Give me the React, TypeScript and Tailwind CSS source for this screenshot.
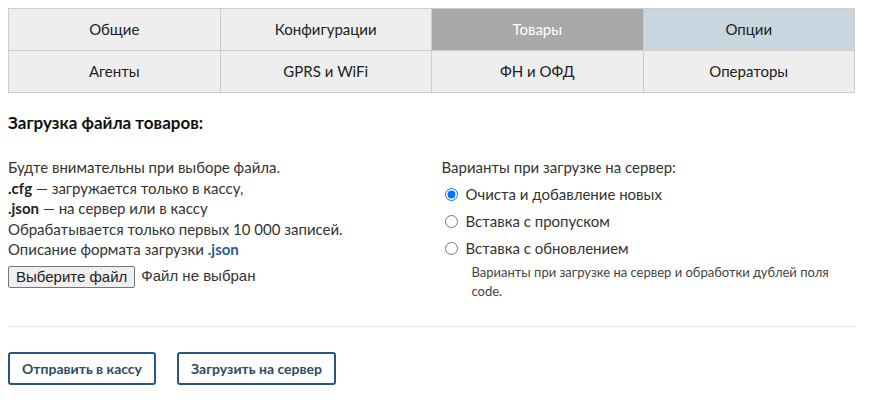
import React from "react"

const tabs = [
  { label: "Общие", cls: "bg-[#eeeeee] text-[#222]" },
  { label: "Конфигурации", cls: "bg-[#eeeeee] text-[#222]" },
  { label: "Товары", cls: "bg-[#a9a9a9] text-white" },
  { label: "Опции", cls: "bg-[#c8d6df] text-[#222]" },
  { label: "Агенты", cls: "bg-[#eeeeee] text-[#222]" },
  { label: "GPRS и WiFi", cls: "bg-[#eeeeee] text-[#222]" },
  { label: "ФН и ОФД", cls: "bg-[#eeeeee] text-[#222]" },
  { label: "Операторы", cls: "bg-[#eeeeee] text-[#222]" },
]

const modes = ["Очиста и добавление новых", "Вставка с пропуском", "Вставка с обновлением"]

export default function App() {
  return (
    <div className="w-[863px] min-h-[407px] bg-white p-2 font-['Lato','Open_Sans',sans-serif] text-[#333]">
      {/* Tabs */}
      <div className="grid grid-cols-4 gap-px bg-[#cdcdcd] p-px">
        {tabs.map((t) => (
          <div key={t.label} className={`h-[41px] flex items-center justify-center text-[15px] ${t.cls}`}>
            {t.label}
          </div>
        ))}
      </div>

      <h2 className="mt-[18px] text-[17px] leading-6 font-bold text-[#111]">Загрузка файла товаров:</h2>

      <div className="mt-[22px] grid grid-cols-2 text-[15px] leading-[20.5px]">
        <div>
          <p>Будте внимательны при выборе файла.</p>
          <p><b className="text-[#222]">.cfg</b> — загружается только в кассу,</p>
          <p><b className="text-[#222]">.json</b> — на сервер или в кассу</p>
          <p>Обрабатывается только первых 10 000 записей.</p>
          <p>
            Описание формата загрузки <a className="font-bold text-[#1f5d99]">.json</a>
          </p>
          <div className="mt-[6px] flex items-center gap-[6px] font-['Liberation_Sans',Arial,sans-serif] text-[15px] text-[#222]">
            <button className="h-[22px] px-[7px] rounded-[2px] border border-[#767676] bg-[#efefef] leading-none">
              Выберите файл
            </button>
            <span className="text-[#333]">Файл не выбран</span>
          </div>
        </div>

        <div className="pl-[10px]">
          <p>Варианты при загрузке на сервер:</p>
          <div className="mt-[3px]">
            {modes.map((m, i) => (
              <label key={m} className="flex items-center h-[27px] pl-[3px]">
                <input type="radio" name="mode" defaultChecked={i === 0} className="m-0 w-[13px] h-[13px]" />
                <span className="ml-[8px]">{m}</span>
              </label>
            ))}
          </div>
          <p className="mt-px ml-[30px] w-[365px] text-[13px] leading-[19px] text-[#444]">
            Варианты при загрузке на сервер и обработки дублей поля code.
          </p>
        </div>
      </div>

      <hr className="mt-[25px] border-0 border-t border-[#e6e6e6]" />

      <div className="mt-[25px] flex gap-[21px]">
        <button className="h-[33px] px-3 rounded-[3px] border-2 border-[#2b5583] text-[14px] font-bold text-[#2c4a6c]">
          Отправить в кассу
        </button>
        <button className="h-[33px] px-3 rounded-[3px] border-2 border-[#2b5583] text-[14px] font-bold text-[#2c4a6c]">
          Загрузить на сервер
        </button>
      </div>
    </div>
  )
}
